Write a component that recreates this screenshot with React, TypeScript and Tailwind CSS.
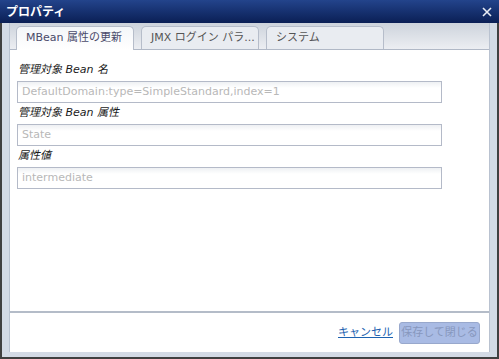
import React from 'react';

const font = { fontFamily: '"DejaVu Sans", "Noto Sans CJK JP", sans-serif' };

function Field({ label, value }: { label: string; value: string }) {
  return (
    <div className="flex flex-col">
      <div className="h-[21px] flex items-center pl-[8px] text-[11px] italic text-[#1a1a1a]">{label}</div>
      <div className="ml-[7px] w-[425px] h-[22px] border border-[#b4bac8] bg-gradient-to-b from-[#eef0f3] to-white to-[30%] flex items-center px-[4px] text-[11px] text-[#b8b8b8]">
        {value}
      </div>
    </div>
  );
}

function Tab({ label, active }: { label: string; active?: boolean }) {
  return (
    <div
      className={
        'w-[118px] h-[23px] rounded-t-[5px] border border-b-0 border-[#b6bdca] flex items-center pl-[9px] text-[11px] ' +
        (active ? 'bg-gradient-to-b from-[#f4f6f9] to-white text-[#4a4a6a] h-[24px] -mb-px' : 'bg-[#e9ecf1] text-[#555]')
      }
    >
      {label}
    </div>
  );
}

export default function App() {
  return (
    <div className="w-[499px] h-[359px] flex flex-col bg-[#d3dae5] border-x-2 border-b-2 border-[#404040]" style={font}>
      <div className="h-[23px] -mx-[2px] bg-gradient-to-b from-[#23448c] to-[#0b1f55] flex items-center justify-between pl-[6px] pr-[7px]">
        <span className="text-white font-bold text-[12px]">プロパティ</span>
        <svg width="10" height="10" viewBox="0 0 10 10">
          <path d="M1 1 L9 9 M9 1 L1 9" stroke="#e8ecf4" strokeWidth="1.6" />
        </svg>
      </div>
      <div className="flex-1 flex flex-col px-[7px] pb-[5px]">
        <div className="flex-1 flex flex-col bg-white border-x border-[#b9c2d0]">
          <div className="h-[27px] bg-gradient-to-b from-[#cdd3dc] to-[#eceef2] border-b border-[#b0b8c6] flex items-end gap-[7px] pl-[6px]">
            <Tab label="MBean 属性の更新" active />
            <Tab label="JMX ログイン パラ..." />
            <Tab label="システム" />
          </div>
          <div className="h-[263px] border-b-2 border-[#b4bcc8] pt-[10px] flex flex-col">
            <Field label="管理対象 Bean 名" value="DefaultDomain:type=SimpleStandard,index=1" />
            <Field label="管理対象 Bean 属性" value="State" />
            <Field label="属性値" value="intermediate" />
          </div>
          <div className="flex-1 flex items-center justify-end gap-[6px] pr-[9px] pt-[1px]">
            <span className="text-[11px] text-[#1d62b0] underline">キャンセル</span>
            <div className="w-[81px] h-[22px] rounded-[3px] border border-[#98a8cc] bg-[#a9bbe4] flex items-center justify-center text-[11px] text-[#8797bd]">
              保存して閉じる
            </div>
          </div>
        </div>
      </div>
    </div>
  );
}
